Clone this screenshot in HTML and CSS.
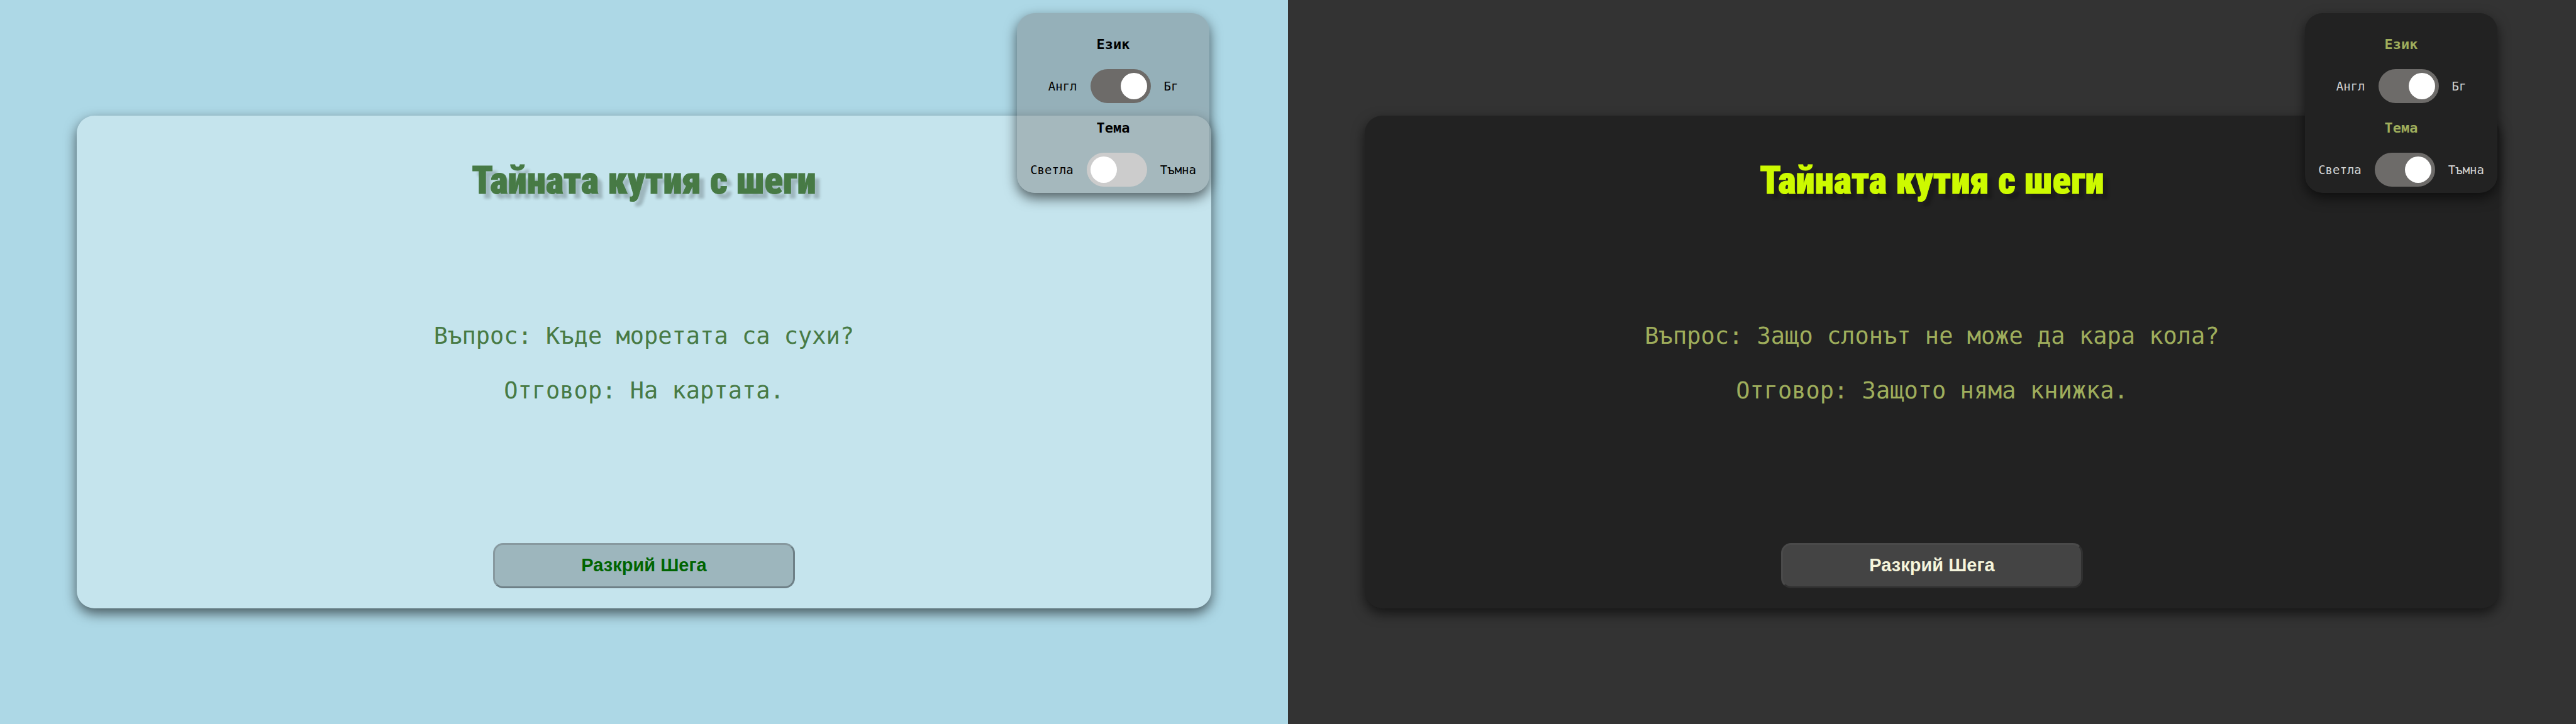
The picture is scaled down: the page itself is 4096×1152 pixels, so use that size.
FILE: index.html
```html
<!DOCTYPE html>
<html lang="bg">
<head>
<meta charset="utf-8">
<title>Тайната кутия с шеги</title>
<link rel="stylesheet" href="styles.css">
</head>
<body>
<main class="pane pane-light">
  <aside class="settings">
    <h2 class="settings-title">Език</h2>
    <div class="settings-row">
      <span>Англ</span>
      <input class="toggle" type="checkbox" role="switch" aria-label="Език" checked>
      <span>Бг</span>
    </div>
    <h2 class="settings-title">Тема</h2>
    <div class="settings-row">
      <span>Светла</span>
      <input class="toggle" type="checkbox" role="switch" aria-label="Тема">
      <span>Тъмна</span>
    </div>
  </aside>
  <section class="card">
    <h1 class="title">Тайната кутия с шеги</h1>
    <div class="joke">
      <p>Въпрос: Къде моретата са сухи?</p>
      <p>Отговор: На картата.</p>
    </div>
    <button class="reveal" type="button">Разкрий Шега</button>
  </section>
</main>
<main class="pane pane-dark">
  <aside class="settings">
    <h2 class="settings-title">Език</h2>
    <div class="settings-row">
      <span>Англ</span>
      <input class="toggle" type="checkbox" role="switch" aria-label="Език" checked>
      <span>Бг</span>
    </div>
    <h2 class="settings-title">Тема</h2>
    <div class="settings-row">
      <span>Светла</span>
      <input class="toggle" type="checkbox" role="switch" aria-label="Тема" checked>
      <span>Тъмна</span>
    </div>
  </aside>
  <section class="card">
    <h1 class="title">Тайната кутия с шеги</h1>
    <div class="joke">
      <p>Въпрос: Защо слонът не може да кара кола?</p>
      <p>Отговор: Защото няма книжка.</p>
    </div>
    <button class="reveal" type="button">Разкрий Шега</button>
  </section>
</main>
</body>
</html>
```
FILE: styles.css
```css
* { box-sizing: border-box; }

body {
  margin: 0;
  display: grid;
  grid-template-columns: 1fr 1fr;
  min-height: 100vh;
  font-family: Consolas, "DejaVu Sans Mono", monospace;
}

h1, h2, p { margin: 0; }

.pane {
  --shadow: 0 8px 20px rgba(0, 0, 0, 0.6);
  position: relative;
  display: flex;
  overflow: hidden;
  padding: 184px 122px;
  background: var(--page);
  color: var(--text);
}

.pane-light {
  --page: #add8e6;
  --card: rgba(255, 255, 255, 0.3);
  --panel: rgba(109, 105, 106, 0.36);
  --title: #477a45;
  --joke: #477a45;
  --heading: #000;
  --text: #000;
  --button: rgba(0, 0, 0, 0.2);
  --button-text: #006400;
  --edge-light: #87999f;
  --edge-dark: #6e8087;
}

.pane-dark {
  --page: #333;
  --card: #222;
  --panel: #222;
  --title: #cdfa00;
  --joke: #9fae5c;
  --heading: #9fae5c;
  --text: #d3d3d3;
  --button: #444;
  --button-text: #f5f5dc;
  --edge-light: #4a4a4a;
  --edge-dark: #303030;
}

.card {
  flex: 1;
  display: flex;
  flex-direction: column;
  align-items: center;
  padding: 65px 32px 32px;
  border-radius: 28px;
  background: var(--card);
  box-shadow: var(--shadow);
}

.title {
  font: 900 61px/76px Impact, "Roboto Condensed", sans-serif;
  color: var(--title);
  -webkit-text-stroke: 1px var(--title);
  text-shadow: 8px 8px 4px rgba(0, 0, 0, 0.2);
}

.joke {
  flex: 1;
  display: flex;
  flex-direction: column;
  justify-content: center;
  gap: 44px;
  padding-bottom: 34px;
  font-size: 37px;
  line-height: 43px;
  text-align: center;
  color: var(--joke);
}

.reveal {
  width: 480px;
  height: 72px;
  padding: 0 0 2px;
  border: 3px solid;
  border-color: var(--edge-light) var(--edge-dark) var(--edge-dark) var(--edge-light);
  border-radius: 16px;
  background: var(--button);
  font: bold 29px/34px Arial, "Liberation Sans", sans-serif;
  color: var(--button-text);
  cursor: pointer;
}

.settings {
  position: absolute;
  z-index: 1;
  top: 21px;
  right: 125px;
  display: flex;
  flex-direction: column;
  align-items: center;
  padding: 37px 21px 10px;
  border-radius: 28px;
  background: var(--panel);
  box-shadow: var(--shadow);
}

.settings-title {
  font-size: 22px;
  line-height: 26px;
  color: var(--heading);
}

.settings-row {
  display: flex;
  align-items: center;
  gap: 21px;
  margin-top: 26px;
  font-size: 19px;
  line-height: 22px;
}

.settings-row + .settings-title { margin-top: 27px; }

.toggle {
  appearance: none;
  display: flex;
  width: 96px;
  height: 54px;
  margin: 0;
  padding: 6px;
  border-radius: 27px;
  background: #ccc;
  cursor: pointer;
}

.toggle::before {
  content: "";
  width: 42px;
  height: 42px;
  border-radius: 50%;
  background: #fff;
}

.toggle:checked {
  justify-content: flex-end;
  background: #6d6b69;
}
```
